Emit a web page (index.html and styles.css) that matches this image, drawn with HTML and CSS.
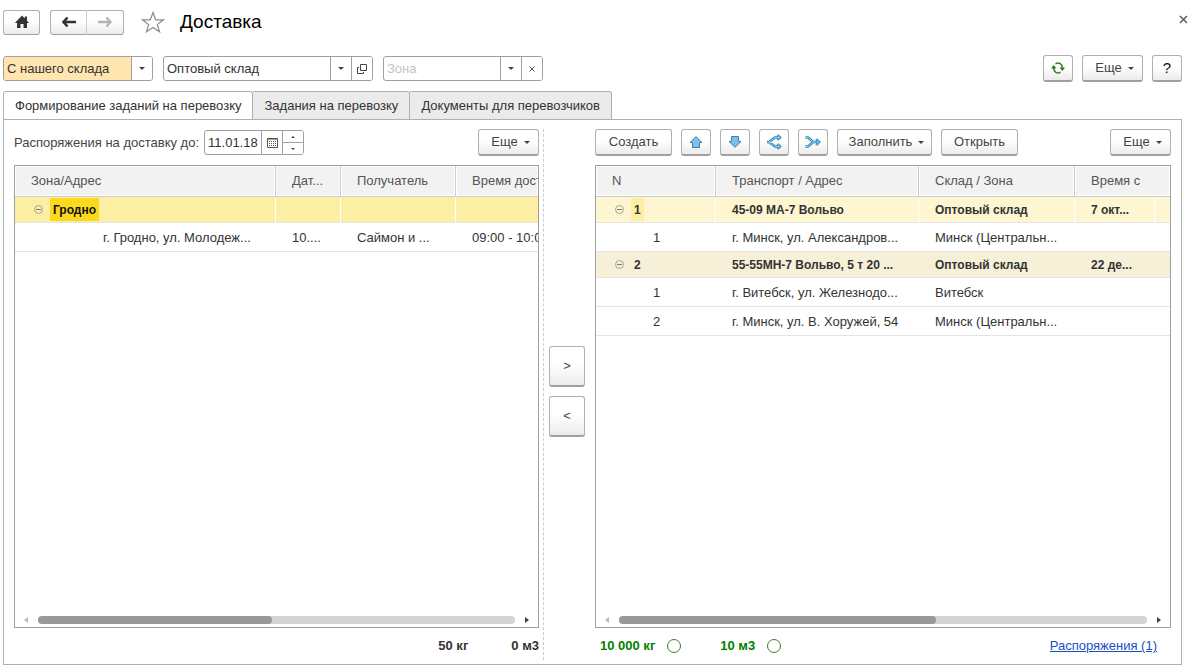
FILE: index.html
```html
<!DOCTYPE html>
<html lang="ru">
<head>
<meta charset="utf-8">
<title>Доставка</title>
<link rel="stylesheet" href="styles.css">
</head>
<body>
<header class="titlebar">
  <button class="btn btn-home" aria-label="Домой"><svg width="16" height="14" viewBox="0 0 16 14"><path d="M8 .5.800 8H3v5h3.500V9h3v4H13V8h2.200L13 5.700V1.500h-2.200v2z" fill="#333"/></svg></button>
  <div class="btn-group">
    <button class="btn" aria-label="Назад"><svg width="16" height="12" viewBox="0 0 16 12"><path d="M6.500 1.500 2.500 6l4 4.500M3 6h12" fill="none" stroke="#333" stroke-width="2.600"/></svg></button>
    <button class="btn" aria-label="Вперед"><svg width="16" height="12" viewBox="0 0 16 12"><path d="M9.500 1.500l4 4.500-4 4.500M13 6H1" fill="none" stroke="#b4b4b4" stroke-width="2.400"/></svg></button>
  </div>
  <button class="plain star" aria-label="В избранное"><svg width="24" height="22" viewBox="0 0 24 22"><path d="M12 1.500l2.700 7.300h7.800l-6.200 4.800 2.300 7.200-6.600-4.400-6.600 4.400 2.300-7.200L1.500 8.800h7.800z" fill="#fff" stroke="#8c8c8c" stroke-width="1.200"/></svg></button>
  <h1 class="title">Доставка</h1>
  <button class="plain close" aria-label="Закрыть"><svg width="9" height="9" viewBox="0 0 9 9"><path d="M1 1l7 7M8 1 1 8" stroke="#555" stroke-width="1.400"/></svg></button>
</header>

<div class="filters">
  <div class="field field-mode">
    <select class="mode" aria-label="Вариант доставки"><option>С нашего склада</option></select>
    <button class="part" aria-label="Выбрать вариант"><i class="caret"></i></button>
  </div>
  <div class="field field-store">
    <input type="text" value="Оптовый склад" aria-label="Склад">
    <button class="part" aria-label="Выбрать склад"><i class="caret"></i></button>
    <button class="part" aria-label="Открыть склад"><svg width="10" height="10" viewBox="0 0 10 10"><path d="M3.500.5h6v6h-6zM2 3.500H.5v6h6V8" fill="none" stroke="#444"/></svg></button>
  </div>
  <div class="field field-zone">
    <input type="text" placeholder="Зона" aria-label="Зона">
    <button class="part" aria-label="Выбрать зону"><i class="caret"></i></button>
    <button class="part" aria-label="Очистить"><svg width="6" height="6" viewBox="0 0 6 6"><path d="M.5.5l5 5M5.500.5l-5 5" stroke="#555"/></svg></button>
  </div>
  <div class="actions">
    <button class="btn btn-icon" aria-label="Обновить"><svg width="14" height="12" viewBox="0 0 14 12"><path d="M4.500 1.700Q7 .5 9.200 1.700T11.300 6M9.500 10.300Q7 11.500 4.800 10.300T2.700 6" fill="none" stroke="#2f7d1c" stroke-width="1.500"/><path d="M8.500 5.500H14L11.300 9zM0 6.500h5.500L2.700 3z" fill="#2f7d1c"/></svg></button>
    <button class="btn btn-more">Еще <i class="caret"></i></button>
    <button class="btn btn-icon help">?</button>
  </div>
</div>

<main class="workspace">
  <nav class="tabs" role="tablist">
    <button class="tab active" role="tab" aria-selected="true">Формирование заданий на перевозку</button>
    <button class="tab" role="tab">Задания на перевозку</button>
    <button class="tab" role="tab">Документы для перевозчиков</button>
  </nav>
  <div class="panel">
    <section class="pane pane-left">
      <div class="toolbar">
        <label class="date-label" for="date">Распоряжения на доставку до:</label>
        <div class="field field-date">
          <input type="text" id="date" value="11.01.18">
          <button class="part" aria-label="Календарь"><svg width="11" height="10" viewBox="0 0 11 10"><path d="M.5.5h10v9H.5z" fill="none" stroke="#555"/><path d="M1 1.500h9" stroke="#999"/><path d="M2 3.500h7M2 5.500h7M2 7.500h7" stroke="#555" stroke-dasharray="1 1"/></svg></button>
          <div class="part spin">
            <button aria-label="Больше"><i class="caret small up"></i></button>
            <button aria-label="Меньше"><i class="caret small"></i></button>
          </div>
        </div>
        <button class="btn btn-more push">Еще <i class="caret"></i></button>
      </div>
      <div class="grid-box">
        <table class="grid grid-orders">
          <colgroup><col class="c-zone"><col class="c-date"><col class="c-client"><col></colgroup>
          <thead><tr><th>Зона/Адрес</th><th>Дат...</th><th>Получатель</th><th>Время доставки</th></tr></thead>
          <tbody>
            <tr class="group current"><td class="tree"><div class="node"><i class="fold"></i><span class="mark">Гродно</span></div></td><td></td><td></td><td></td></tr>
            <tr><td class="address">г. Гродно, ул. Молодеж...</td><td>10....</td><td>Саймон и ...</td><td>09:00 - 10:00</td></tr>
          </tbody>
        </table>
        <div class="scroll"><i class="arrow left"></i><div class="track"><div class="thumb thumb-left"></div></div><i class="arrow right"></i></div>
      </div>
      <div class="totals totals-left"><span>50 кг</span><span>0 м3</span></div>
    </section>

    <div class="mover">
      <button class="btn">&gt;</button>
      <button class="btn">&lt;</button>
    </div>

    <section class="pane pane-right">
      <div class="toolbar tools">
        <button class="btn btn-text">Создать</button>
        <button class="btn btn-icon" aria-label="Вверх"><svg width="14" height="12" viewBox="0 0 14 12"><path d="M7 .7 13 6.500h-2.500v5h-7v-5H1z" fill="#7cc0ea" stroke="#3f7fab"/></svg></button>
        <button class="btn btn-icon" aria-label="Вниз"><svg width="14" height="12" viewBox="0 0 14 12"><path d="M7 11.300 13 5.500h-2.500v-5h-7v5H1z" fill="#7cc0ea" stroke="#3f7fab"/></svg></button>
        <button class="btn btn-icon" aria-label="Разделить"><svg width="16" height="16" viewBox="0 0 16 16"><path d="M13.500 3.500H9L3 8l6 4.500h4.500M11.500 1.200l2.500 2.300-2.500 2.300M11.500 10.200l2.500 2.300-2.500 2.300M1 8h4" fill="none" stroke="#2f80b3" stroke-width="2.400"/><path d="M13.500 3.500H9L3 8l6 4.500h4.500M11.800 1.500 14 3.500l-2.200 2M11.800 10.500l2.200 2-2.200 2M1.500 8h4" fill="none" stroke="#8bd0f5" stroke-width="1"/></svg></button>
        <button class="btn btn-icon" aria-label="Объединить"><svg width="16" height="12" viewBox="0 0 16 12"><path d="M.5 1.500h2.500L8.500 6 3 10.500H.5M6 6h8M11.200 3 14.200 6l-3 3" fill="none" stroke="#2f80b3" stroke-width="2.400"/><path d="M1 1.500h2L8.500 6 3 10.500H1M7 6h7M11.500 3.300 14.200 6l-2.700 2.700" fill="none" stroke="#8bd0f5" stroke-width="1"/></svg></button>
        <button class="btn btn-fill">Заполнить <i class="caret"></i></button>
        <button class="btn btn-text">Открыть</button>
        <button class="btn btn-more push">Еще <i class="caret"></i></button>
      </div>
      <div class="grid-box">
        <table class="grid grid-tasks">
          <colgroup><col class="c-num"><col class="c-transport"><col class="c-store"><col class="c-time"><col></colgroup>
          <thead><tr><th>N</th><th>Транспорт / Адрес</th><th>Склад / Зона</th><th colspan="2">Время с</th></tr></thead>
          <tbody>
            <tr class="group selected"><td class="tree"><div class="node"><i class="fold"></i><span class="mark">1</span></div></td><td>45-09 МА-7 Вольво</td><td>Оптовый склад</td><td>7 окт...</td><td></td></tr>
            <tr><td class="number">1</td><td>г. Минск, ул. Александров...</td><td>Минск (Центральн...</td><td></td><td></td></tr>
            <tr class="group"><td class="tree"><div class="node"><i class="fold"></i><span class="mark">2</span></div></td><td>55-55МН-7 Вольво, 5 т 20 ...</td><td>Оптовый склад</td><td>22 де...</td><td></td></tr>
            <tr><td class="number">1</td><td>г. Витебск, ул. Железнодо...</td><td>Витебск</td><td></td><td></td></tr>
            <tr><td class="number">2</td><td>г. Минск, ул. В. Хоружей, 54</td><td>Минск (Центральн...</td><td></td><td></td></tr>
          </tbody>
        </table>
        <div class="scroll"><i class="arrow left"></i><div class="track"><div class="thumb thumb-right"></div></div><i class="arrow right"></i></div>
      </div>
      <div class="totals totals-right">
        <span class="total">10 000 кг <i class="ring"></i></span>
        <span class="total">10 м3 <i class="ring"></i></span>
        <a class="push" href="#orders">Распоряжения (1)</a>
      </div>
    </section>
  </div>
</main>
</body>
</html>
```

FILE: styles.css
```css
* { box-sizing: border-box; }
body {
  margin: 0;
  min-height: 100vh;
  padding: 9px 11px 5px 3px;
  display: flex;
  flex-direction: column;
  background: #fff;
  color: #333;
  font: 13px/16px "Liberation Sans", Arial, sans-serif;
}
button, input, select { font: inherit; color: inherit; margin: 0; }
svg { display: block; }
.push { margin-left: auto; }

.btn {
  display: flex;
  align-items: center;
  justify-content: center;
  height: 27px;
  padding: 0;
  border: 1px solid #b0b0b0;
  border-bottom: 2px solid #a0a0a0;
  border-radius: 3px;
  background: linear-gradient(#fff 45%, #ebebeb);
  color: #444;
}
.btn-icon { width: 30px; }
.btn-more { width: 61px; gap: 6px; padding-left: 4px; }
.btn-text { width: 77px; }
.btn-fill { width: 95px; gap: 6px; padding-left: 4px; }
.help { font-size: 15px; color: #111; }
.plain { border: 0; padding: 0; background: none; }

.caret {
  width: 0;
  height: 0;
  border: 3px solid transparent;
  border-top-color: #444;
  border-bottom: 0;
}
.caret.small { border-width: 2px; border-bottom: 0; }
.caret.up { transform: rotate(180deg); }

.titlebar { display: flex; align-items: center; height: 26px; }
.titlebar .btn { height: 25px; border-bottom-width: 1px; }
.btn-home { width: 37px; }
.btn-group { display: flex; margin: 0 17px 0 10px; }
.btn-group .btn { width: 37px; }
.btn-group .btn:first-child { border-radius: 3px 0 0 3px; border-right-color: #ccc; }
.btn-group .btn:last-child { border-radius: 0 3px 3px 0; border-left: 0; }
.title { margin: 0 0 0 15px; font-size: 19px; line-height: 24px; font-weight: 400; color: #000; }
.close { margin: 0 -6px 6px auto; }

.filters { display: flex; gap: 10px; margin-top: 20px; height: 27px; align-items: center; }
.field {
  display: flex;
  height: 25px;
  border: 1px solid #a0a0a0;
  border-radius: 3px;
  overflow: hidden;
  background: #fff;
}
.field input, .field select {
  flex: 1;
  min-width: 0;
  padding: 0 3px;
  border: 0;
  border-radius: 0;
  outline: 0;
  appearance: none;
  background: transparent;
}
.field .mode { background: #ffe5b0; }
.field input::placeholder { color: #c4c4c4; opacity: 1; }
.part {
  display: flex;
  align-items: center;
  justify-content: center;
  width: 21px;
  padding: 0;
  border: 0;
  border-left: 1px solid #a0a0a0;
  background: #fff;
}
.field-mode, .field-date { flex: none; }
.field-mode { width: 150px; }
.field-store { width: 210px; }
.field-zone { width: 160px; }
.actions { display: flex; gap: 9px; margin-left: auto; }

.workspace { flex: 1; display: flex; flex-direction: column; margin-top: 9px; }
.tabs { display: flex; margin-bottom: -1px; }
.tab {
  height: 29px;
  padding: 0 11px;
  border: 1px solid #b0b0b0;
  border-left: 0;
  border-radius: 0 3px 0 0;
  background: #ebebeb;
}
.tab.active { border-left: 1px solid #b0b0b0; border-bottom-color: #fff; border-radius: 3px 3px 0 0; background: #fff; }

.panel { flex: 1; display: flex; border: 1px solid #b0b0b0; padding: 9px 10px 4px; }
.pane { display: flex; flex-direction: column; min-width: 0; }
.pane-left { flex: 525 1 0; }
.pane-right { flex: 576 1 0; }
.toolbar { display: flex; align-items: center; height: 27px; margin-bottom: 9px; }
.tools { gap: 9px; }
.date-label { margin-right: 5px; color: #444; white-space: nowrap; }
.field-date { width: 100px; }
.spin { flex-direction: column; }
.spin button {
  flex: 1;
  display: flex;
  width: 100%;
  align-items: center;
  justify-content: center;
  padding: 0;
  border: 0;
  background: none;
}
.spin button + button { border-top: 1px solid #a0a0a0; }

.mover {
  display: flex;
  flex-direction: column;
  justify-content: center;
  gap: 9px;
  margin-left: 4px;
  padding: 0 10px 6px 5px;
  border-left: 1px dashed #ccc;
}
.mover .btn { width: 36px; height: 41px; }

.grid-box { flex: 1; display: flex; flex-direction: column; border: 1px solid #a0a0a0; overflow: hidden; }
.grid { width: 100%; table-layout: fixed; border-collapse: separate; border-spacing: 0; }
.c-zone { width: 261px; }
.c-date { width: 65px; }
.c-client { width: 115px; }
.c-num { width: 120px; }
.c-transport { width: 203px; }
.c-store { width: 156px; }
.c-time { width: 80px; }
.grid th, .grid td {
  height: 29px;
  padding: 0 0 0 16px;
  overflow: hidden;
  white-space: nowrap;
  text-align: left;
  border-bottom: 1px solid #e4e4e4;
}
.grid td { padding-top: 2px; }
.grid th {
  height: 31px;
  font-weight: 400;
  color: #555;
  background: #f2f2f2;
  border-right: 1px solid #ccc;
  border-bottom-color: #ccc;
  box-shadow: inset 0 0 0 1px #fff;
}
.grid th:last-child { border-right: 0; }
.grid .group td { height: 26px; padding-top: 0; font-size: 12px; font-weight: 700; background: #f7f0d8; }
.grid .current td { background: #fcefa4; border-right: 1px solid #fff; }
.grid .selected td { background: #fdf6d0; border-right: 1px solid #fff; }
.grid .group td:last-child { border-right: 0; }
.grid td.tree { padding-left: 19px; }
.grid td.number { padding-left: 57px; }
.grid td.address { padding-left: 88px; }
.node { display: flex; align-items: center; height: 25px; }
.fold {
  display: flex;
  align-items: center;
  width: 9px;
  height: 9px;
  margin-right: 7px;
  padding: 0 1px;
  border: 1px solid #aaa48c;
  border-radius: 50%;
}
.fold::before { content: ""; flex: 1; height: 1px; background: #777; }
.mark { height: 23px; padding: 0 3px; line-height: 24px; }
.current .mark { background: #fcd91c; color: #111; }
.selected .mark { background: #fcefa4; }

.scroll { display: flex; align-items: center; gap: 10px; height: 15px; margin-top: auto; padding: 0 9px; }
.track { flex: 1; height: 8px; border-radius: 4px; background: #d4d4d4; }
.thumb { height: 8px; border-radius: 4px; background: #999; }
.thumb-left { width: 49%; }
.thumb-right { width: 60%; }
.arrow { border: 3px solid transparent; }
.arrow.left { border-right: 4px solid #bbb; border-left: 0; }
.arrow.right { border-left: 4px solid #444; border-right: 0; }

.totals { display: flex; align-items: center; height: 32px; padding-top: 4px; font-weight: 700; }
.totals-left { justify-content: flex-end; gap: 43px; }
.totals-right { gap: 39px; padding: 4px 14px 0 5px; color: #008000; }
.total { display: flex; align-items: center; gap: 12px; }
.ring { width: 14px; height: 14px; border: 1px solid #3c7d28; border-radius: 50%; }
.totals a { font-weight: 400; color: #1a4fc0; text-decoration: underline; }
```
